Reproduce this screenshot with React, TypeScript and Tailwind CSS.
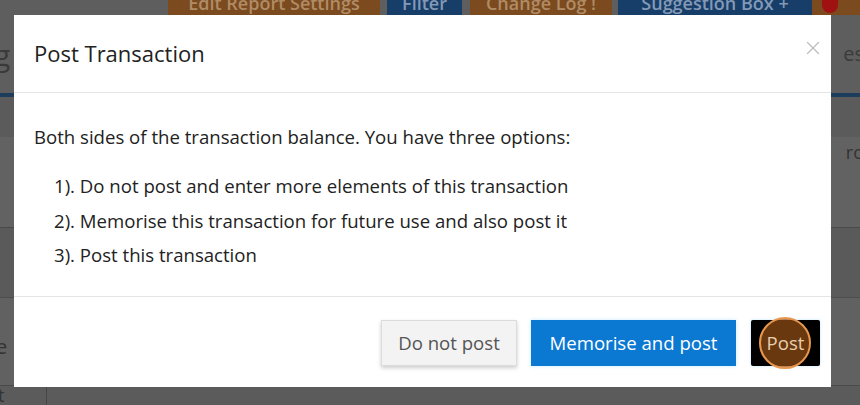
import { X } from "lucide-react";

const font = "font-['Open_Sans','Liberation_Sans',sans-serif]";

const TopBar = () => (
    <div className="flex flex-row items-end h-[15px] pl-[168px] font-semibold text-[18px] leading-[6px] text-center">
        <div className="h-full w-[212px] bg-[#7b4a1e] text-[#b08c66] overflow-hidden">Edit Report Settings</div>
        <div className="h-full w-[75px] ml-[7px] bg-[#173e68] text-[#8499b6] overflow-hidden">Filter</div>
        <div className="h-full w-[142px] ml-[8px] bg-[#7b4a1e] text-[#b08c66] overflow-hidden">Change Log !</div>
        <div className="h-full w-[194px] ml-[6px] bg-[#173e68] text-[#8499b6] overflow-hidden">Suggestion Box +</div>
        <div className="h-full flex-1 bg-[#7b4a1e] flex items-start pl-[10px]">
            <div className="w-[16px] h-[13px] rounded-b-full bg-[#a01212]"></div>
        </div>
    </div>
);

const Background = () => (
    <div className={`flex flex-col w-full h-full ${font}`}>
        <TopBar/>
        <div className="flex flex-row justify-between h-[78px] items-center text-[#3a3a3a] text-[30px]">
            <span className="-ml-[6px]">g</span>
            <span className="text-[20px] mr-[-4px]">es</span>
        </div>
        <div className="h-[4px] bg-[#1d3d5c]"></div>
        <div className="h-[40px] bg-[#5b5b5b]"></div>
        <div className="h-[90px] bg-[#626262] flex justify-end items-start text-[#333] text-[18px] pr-0">
            <span className="mt-[2px] -mr-[4px]">ro</span>
        </div>
        <div className="h-[70px] bg-[#5a5a5a] border-t border-[#4a4a4a]"></div>
        <div className="h-[88px] bg-[#616161] border-t border-[#4e4e4e] flex items-center text-[#333] text-[20px]">
            <span className="-ml-[4px] mt-[10px]">e</span>
        </div>
        <div className="flex-1 flex flex-row bg-[#5b5b5b] border-t border-[#4a4a4a]">
            <span className="w-[48px] text-[#333] text-[18px] leading-none -ml-[2px]">t</span>
            <div className="flex-1 border-l border-[#464646]"></div>
        </div>
    </div>
);

const Modal = () => (
    <div className={`absolute left-[14px] top-[15px] w-[817px] h-[372px] bg-white flex flex-col ${font}`}>
        <div className="flex flex-row items-center justify-between h-[78px] px-[20px] border-b border-[#e5e5e5]">
            <h4 className="text-[22px] text-[#222]">Post Transaction</h4>
            <X className="text-[#bdbdbd] w-[22px] h-[24px] mr-[-13px] mt-[-12px]" strokeWidth={1.4}/>
        </div>
        <div className="flex flex-col px-[20px] pt-[30px] h-[204px] border-b border-[#e5e5e5] text-[18.6px] text-[#222]">
            <p className="leading-[28px]">Both sides of the transaction balance. You have three options:</p>
            <ul className="pl-[20px] mt-[18px] flex flex-col">
                <li className="leading-[34.5px]">1). Do not post and enter more elements of this transaction</li>
                <li className="leading-[34.5px]">2). Memorise this transaction for future use and also post it</li>
                <li className="leading-[34.5px]">3). Post this transaction</li>
            </ul>
        </div>
        <div className="flex-1 flex flex-row justify-end items-start pt-[23px] pr-[11px] gap-[14px]">
            <button className="h-[46px] w-[136px] bg-[#f3f3f3] border border-[#dcdcdc] shadow-[0_2px_4px_rgba(0,0,0,0.2)] text-[18.6px] text-[#555]">
                Do not post
            </button>
            <button className="h-[46px] w-[205px] bg-[#0b78d1] text-[18.6px] text-white shadow-[0_0_4px_rgba(120,200,255,0.4)]">
                Memorise and post
            </button>
            <div className="relative ml-[1px]">
                <button className="h-[46px] w-[69px] bg-black rounded-[2px] text-[18.6px] text-white shadow-[0_0_3px_rgba(120,200,255,0.5)]">
                    <span className="relative z-10 text-[#e8cdb0]">Post</span>
                </button>
                <div className="absolute left-[8px] top-[-3px] w-[52px] h-[52px] rounded-full bg-[rgba(150,80,20,0.7)] border-2 border-[#e8974f] pointer-events-none"></div>
            </div>
        </div>
    </div>
);

const App = () => {
    return (
        <div className="relative w-[860px] h-[405px] overflow-hidden bg-[#5e5e5e]">
            <Background/>
            <Modal/>
        </div>
    );
};

export default App;
